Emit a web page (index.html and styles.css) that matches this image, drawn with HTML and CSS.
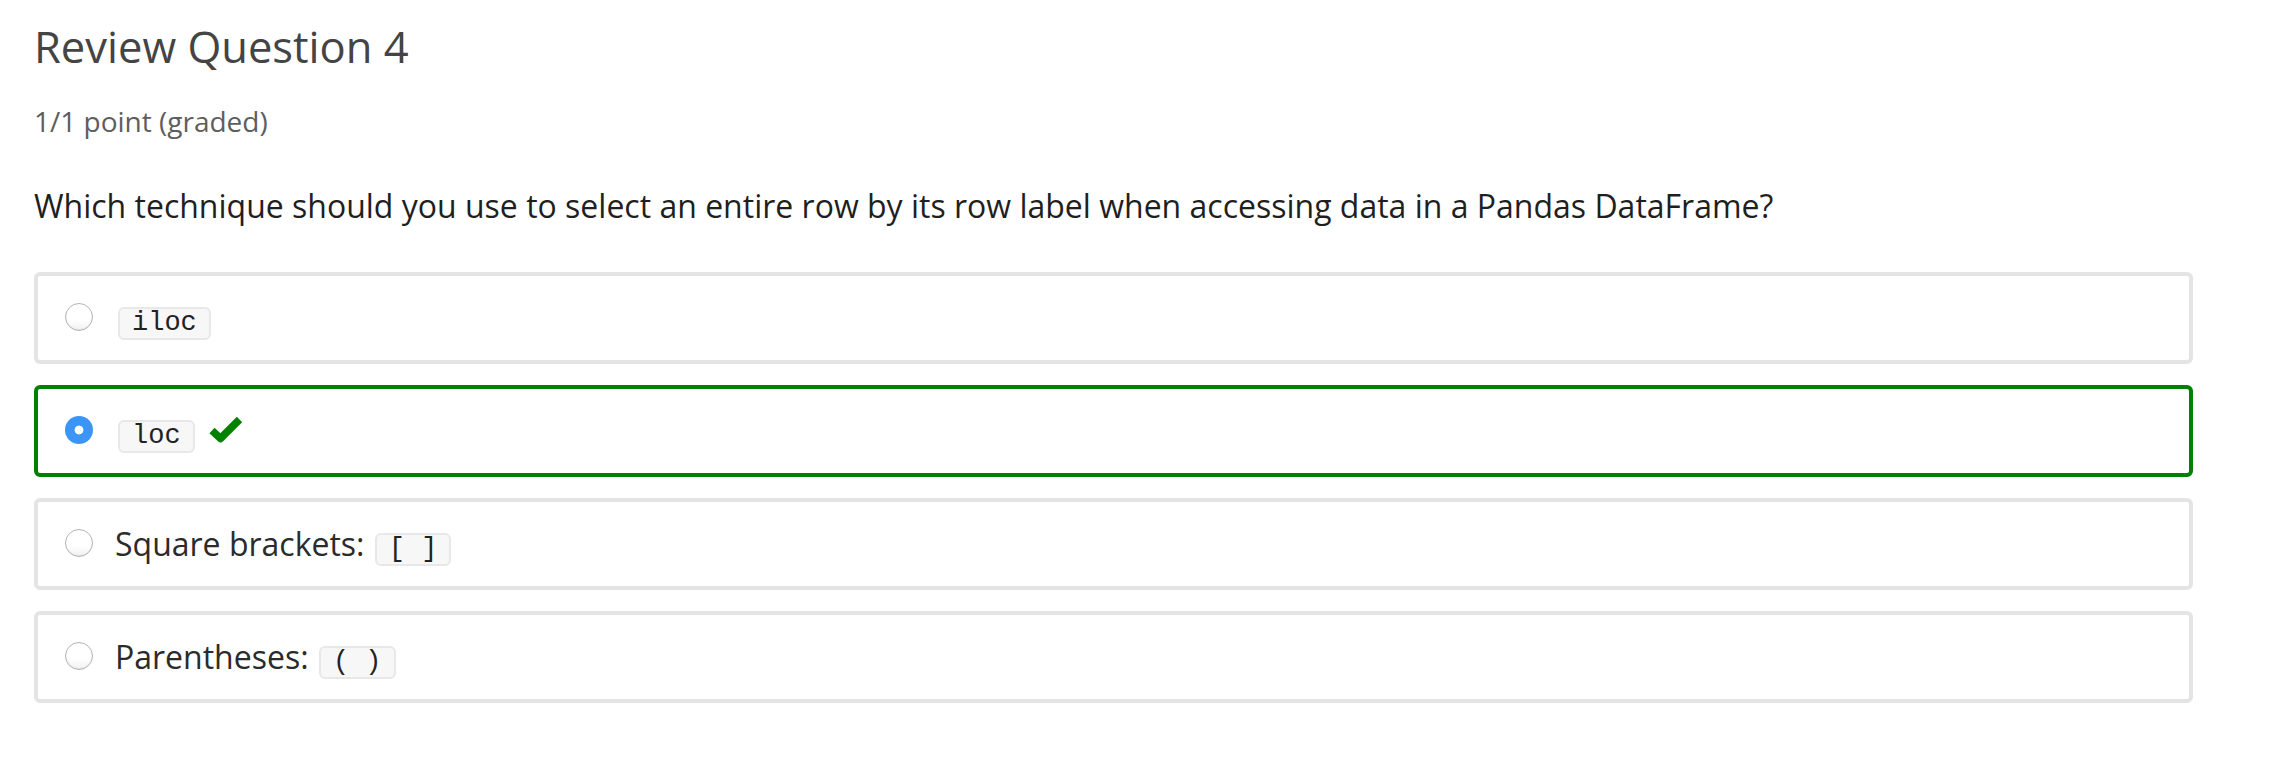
FILE: index.html
```html
<!DOCTYPE html>
<html lang="en">
<head>
<meta charset="utf-8">
<title>Review Question 4</title>
<link rel="stylesheet" href="styles.css">
</head>
<body>
<div class="problem">
  <h2 class="problem-title">Review Question 4</h2>
  <div class="problem-progress">1/1 point (graded)</div>
  <p class="problem-question">Which technique should you use to select an entire row by its row label when accessing data in a Pandas DataFrame?</p>
  <div class="choices">
    <label class="choice">
      <span class="radio"></span>
      <span class="choice-text"><code class="code lead">iloc</code></span>
    </label>
    <label class="choice correct">
      <span class="radio checked"></span>
      <span class="choice-text"><code class="code lead">loc</code></span>
      <svg class="check" width="36" height="28" viewBox="0 0 36 28" aria-hidden="true"><polyline points="4,15.5 12.5,23.5 31.5,4.5" fill="none" stroke="#008100" stroke-width="7.5" stroke-linejoin="round" stroke-linecap="butt"/></svg>
    </label>
    <label class="choice">
      <span class="radio"></span>
      <span class="choice-text">Square brackets: <code class="code">[ ]</code></span>
    </label>
    <label class="choice">
      <span class="radio"></span>
      <span class="choice-text">Parentheses: <code class="code">( )</code></span>
    </label>
  </div>
</div>
</body>
</html>
```

FILE: styles.css
```css
html, body {
  margin: 0;
  padding: 0;
  background: #ffffff;
}

body {
  font-family: "Open Sans", "Noto Sans", sans-serif;
  color: #313131;
}

.problem {
  padding: 17px 77px 0 34px;
}

.problem-title {
  margin: 0;
  font-size: 43.5px;
  line-height: 60px;
  font-weight: 400;
  color: #444444;
}

.problem-progress {
  margin-top: 24px;
  font-size: 28px;
  line-height: 40px;
  color: #5e5e5e;
}

.problem-question {
  margin: 43px 0 0 0;
  font-size: 32px;
  line-height: 44px;
  color: #1f1f1f;
}

.choices {
  margin: 44px 0 0 0;
  display: flex;
  flex-direction: column;
  gap: 21px;
}

.choice {
  display: flex;
  align-items: flex-start;
  height: 44px;
  padding: 20px 20px 20px 27px;
  border: 4px solid #e4e4e4;
  border-radius: 6px;
  font-size: 32px;
  line-height: 44px;
  color: #2b2b2b;
}

.choice.correct {
  border-color: #008100;
}

.radio {
  flex: none;
  box-sizing: border-box;
  width: 28px;
  height: 28px;
  margin-top: 7px;
  margin-right: 22px;
  border-radius: 50%;
  border: 1.5px solid #b3b3b3;
  background: linear-gradient(#ffffff, #ffffff 60%, #f1f1f1);
  box-shadow: inset 0 -1px 1px rgba(0, 0, 0, 0.06);
}

.radio.checked {
  border: none;
  background: radial-gradient(circle, #ffffff 0, #ffffff 4px, #3b95f6 4.8px);
  box-shadow: none;
}

.choice-text {
  white-space: pre;
}

.code {
  display: inline-block;
  margin-left: 2px;
  font-family: "Liberation Mono", "Courier New", monospace;
  font-size: 27px;
  line-height: 29px;
  padding: 0 12px;
  border: 2px solid #e8e8e8;
  border-radius: 6px;
  background: #f7f7f7;
  color: #222222;
  white-space: pre;
}

.code.lead {
  margin-left: 3px;
}

.check {
  flex: none;
  margin-left: 13px;
  margin-top: 6px;
}
```
